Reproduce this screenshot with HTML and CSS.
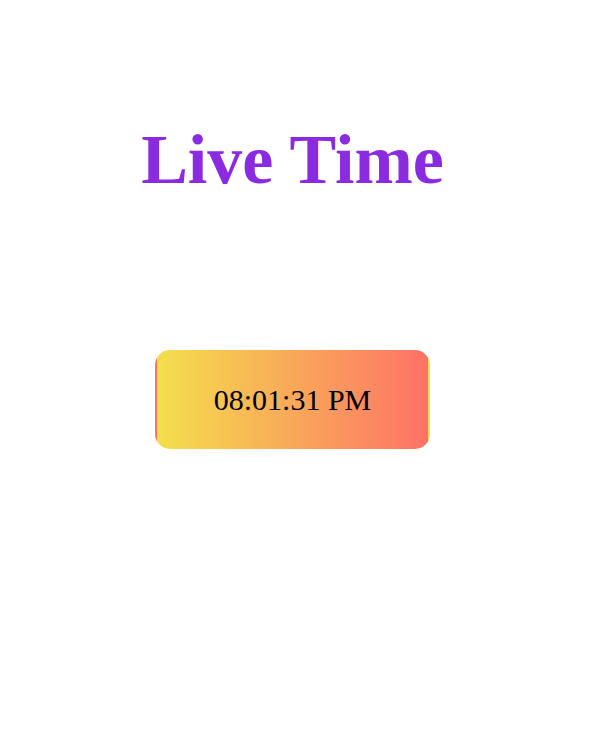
FILE: index.html
```html
<!DOCTYPE html>
<html lang="en">
<head>
<meta charset="utf-8">
<title>Live Time</title>
<link rel="stylesheet" href="styles.css">
</head>
<body>
<main class="page">
  <h1 class="title">Live Time</h1>
  <div class="clock">08:01:31 PM</div>
</main>
</body>
</html>
```
FILE: styles.css
```css
html, body {
  margin: 0;
  padding: 0;
  background: #fff;
}
body {
  font-family: "Liberation Serif", "Times New Roman", serif;
}
.page {
  display: flex;
  flex-direction: column;
  align-items: center;
  padding-right: 5px;
}
.title {
  margin: 121px 0 0;
  font-size: 70px;
  font-weight: bold;
  line-height: 78px;
  color: #8a2be2;
}
.clock {
  margin-top: 151px;
  width: 271px;
  height: 95px;
  display: flex;
  align-items: center;
  justify-content: center;
  box-sizing: content-box;
  border: 2px solid transparent;
  border-radius: 15px;
  background: linear-gradient(to right, #f4df4c, #fe7266);
  font-size: 30px;
  color: #000;
}
```
